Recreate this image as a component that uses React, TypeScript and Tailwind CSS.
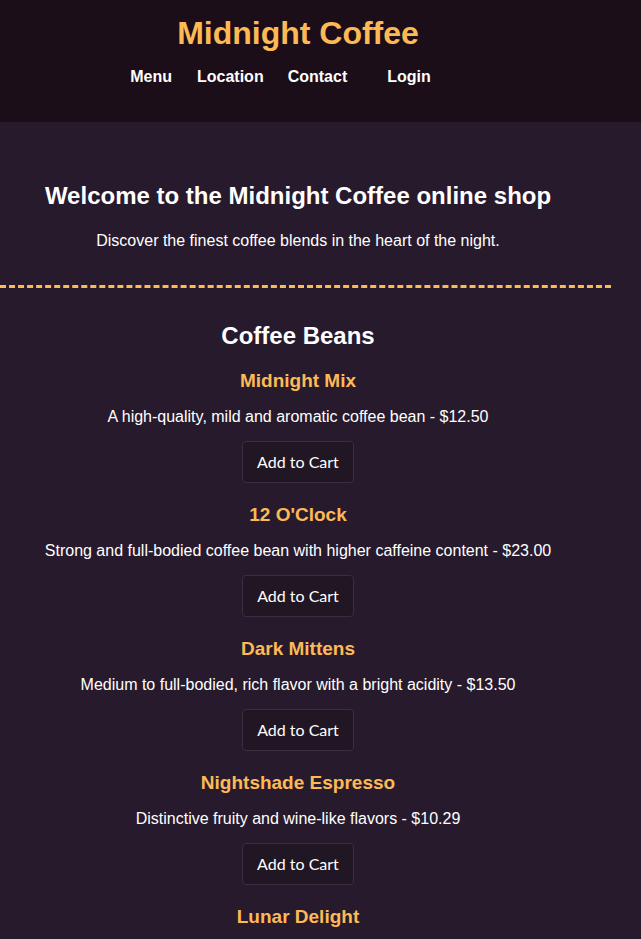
import React from "react";

const products = [
  { name: "Midnight Mix", desc: "A high-quality, mild and aromatic coffee bean - $12.50" },
  { name: "12 O'Clock", desc: "Strong and full-bodied coffee bean with higher caffeine content - $23.00" },
  { name: "Dark Mittens", desc: "Medium to full-bodied, rich flavor with a bright acidity - $13.50" },
  { name: "Nightshade Espresso", desc: "Distinctive fruity and wine-like flavors - $10.29" },
  { name: "Lunar Delight", desc: "Smooth, sweet and balanced with notes of chocolate - $15.00" },
];

export default function App() {
  return (
    <div className="min-h-[939px] bg-[#271a2d] text-white overflow-hidden" style={{ fontFamily: '"Liberation Sans", Arial, sans-serif' }}>
      <header className="bg-[#1b0e19] h-[122px]">
        <div className="w-[596px] flex flex-col items-center">
          <h1 className="mt-[15px] text-[32px] leading-[36px] font-bold text-[#fdba54]">Midnight Coffee</h1>
          <nav className="mt-[17px] flex items-center text-[16px] leading-[18px] font-bold mr-[35px]">
            <a className="mr-[25px]">Menu</a>
            <a className="mr-[24px]">Location</a>
            <a className="mr-[40px]">Contact</a>
            <a>Login</a>
          </nav>
        </div>
      </header>
      <main className="w-[596px] flex flex-col items-center text-center">
        <h2 className="mt-[60px] text-[24px] leading-[28px] font-bold">Welcome to the Midnight Coffee online shop</h2>
        <p className="mt-[22px] text-[16px] leading-[18px]">Discover the finest coffee blends in the heart of the night.</p>
        <div className="mt-[35px] w-[611px] self-start border-t-[3px] border-dashed border-[#fdba54]" />
        <h2 className="mt-[34px] text-[24px] leading-[28px] font-bold">Coffee Beans</h2>
        {products.map((p, i) => (
          <div key={p.name} className="flex flex-col items-center">
            <h3 className={(i === 0 ? "mt-[20px]" : "mt-[21px]") + " text-[19px] leading-[22px] font-bold text-[#fdba54]"}>{p.name}</h3>
            <p className="mt-[16px] text-[16px] leading-[18px]">{p.desc}</p>
            <button
              className="mt-[15px] w-[112px] h-[42px] rounded-[4px] border border-[#3b2e40] bg-[#211624] text-[16px] text-white"
              style={{ fontFamily: 'Lato, sans-serif' }}
            >
              Add to Cart
            </button>
          </div>
        ))}
      </main>
    </div>
  );
}
